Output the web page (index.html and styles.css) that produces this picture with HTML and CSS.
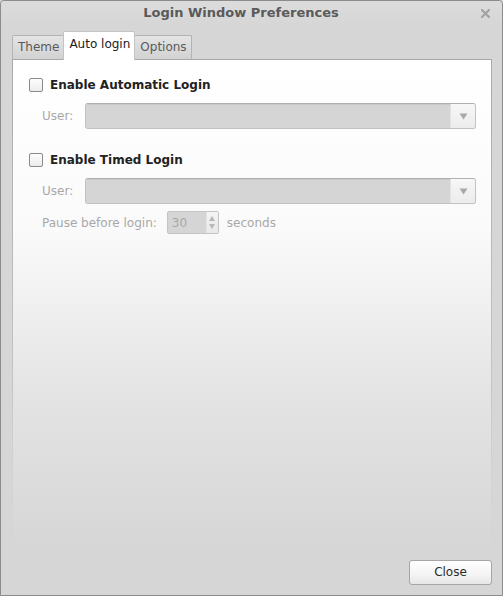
FILE: index.html
```html
<!DOCTYPE html>
<html>
<head>
<meta charset="utf-8">
<link rel="stylesheet" href="styles.css">
</head>
<body>
<div class="window">
  <div class="titlebar">
    <span class="title">Login Window Preferences</span>
    <svg class="close" width="9" height="9" viewBox="0 0 9 9"><path d="M1 1 L8 8 M8 1 L1 8" stroke="#a0a0a0" stroke-width="2" stroke-linecap="round"/></svg>
  </div>
  <div class="body">
    <div class="tabs">
      <div class="tab">Theme</div>
      <div class="tab active">Auto login</div>
      <div class="tab">Options</div>
    </div>
    <div class="panel">
      <div class="check-row">
        <span class="checkbox"></span>
        <span class="check-label">Enable Automatic Login</span>
      </div>
      <div class="field-row">
        <span class="field-label">User:</span>
        <div class="combo"><span class="combo-fill"></span><span class="combo-btn"><svg width="9" height="7" viewBox="0 0 9 7"><path d="M0.5 0.5 H8.5 L4.5 6.5 Z" fill="#a8a8a8"/></svg></span></div>
      </div>
      <div class="check-row second">
        <span class="checkbox"></span>
        <span class="check-label">Enable Timed Login</span>
      </div>
      <div class="field-row">
        <span class="field-label">User:</span>
        <div class="combo"><span class="combo-fill"></span><span class="combo-btn"><svg width="9" height="7" viewBox="0 0 9 7"><path d="M0.5 0.5 H8.5 L4.5 6.5 Z" fill="#a8a8a8"/></svg></span></div>
      </div>
      <div class="pause-row">
        <span class="field-label">Pause before login:</span>
        <div class="spin"><span class="spin-value">30</span><span class="spin-btns"><svg width="6" height="5" viewBox="0 0 6 5"><path d="M0 5 L3 0 L6 5 Z" fill="#b8b8b8"/></svg><svg width="6" height="5" viewBox="0 0 6 5"><path d="M0 0 L3 5 L6 0 Z" fill="#b8b8b8"/></svg></span></div>
        <span class="field-label">seconds</span>
      </div>
    </div>
    <div class="footer">
      <button class="btn">Close</button>
    </div>
  </div>
</div>
</body>
</html>
```
FILE: styles.css
```css
html, body {
  margin: 0;
  padding: 0;
  background: #d6d6d6;
}
body {
  font-family: "DejaVu Sans", sans-serif;
  font-size: 12px;
}
.window {
  box-sizing: border-box;
  width: 503px;
  height: 596px;
  border: 1px solid #8c8c8c;
  border-radius: 4px 4px 0 0;
  background: #d6d6d6;
  display: flex;
  flex-direction: column;
}
.titlebar {
  box-sizing: border-box;
  height: 25px;
  padding-bottom: 2px;
  flex: none;
  display: flex;
  align-items: center;
  justify-content: center;
  position: relative;
  background: linear-gradient(#dcdcdc, #d6d6d6);
  border-radius: 4px 4px 0 0;
}
.title {
  font-weight: bold;
  font-size: 13px;
  color: #5a5a5a;
  margin-left: -21px;
}
.close {
  position: absolute;
  right: 12px;
  top: 8px;
}
.body {
  flex: 1;
  display: flex;
  flex-direction: column;
  padding: 5px 10px 0 11px;
}
.tabs {
  display: flex;
  align-items: flex-end;
  height: 28px;
  padding-left: 0;
  flex: none;
}
.tab {
  box-sizing: border-box;
  height: 24px;
  padding: 0 4px 1px 5px;
  border: 1px solid #b4b4b4;
  border-bottom: none;
  border-radius: 2px 2px 0 0;
  background: linear-gradient(#e4e4e4, #d2d2d2);
  color: #5a5a5a;
  display: flex;
  align-items: center;
}
.tab.active {
  height: 29px;
  margin-bottom: -1px;
  margin-left: -1px;
  margin-right: -1px;
  background: #fff;
  color: #1a1a1a;
  border-color: #c4c4c4;
  padding: 0 4px 4px 5px;
  position: relative;
  z-index: 1;
}
.tab:last-child {
  padding-right: 4px;
}
.panel {
  flex: 1;
  border-top: 1px solid #b0b0b0;
  border-left: 1px solid #b8b8b8;
  border-right: 1px solid #c8c8c8;
  border-image: linear-gradient(#a8a8a8, #c4c4c4 65%, rgba(214,214,214,0)) 1;
  background: linear-gradient(#ffffff 0%, #fafafa 35%, #e4e4e4 68%, #d6d6d6 100%);
  padding: 18px 15px 0 16px;
  display: flex;
  flex-direction: column;
  margin-bottom: 12px;
}
.check-row {
  display: flex;
  align-items: center;
  height: 14px;
}
.check-row.second {
  margin-top: 24px;
}
.checkbox {
  box-sizing: border-box;
  width: 14px;
  height: 14px;
  border: 1px solid #8a8a8a;
  border-radius: 2px;
  background: linear-gradient(#fdfdfd, #ececec);
  margin-right: 7px;
  flex: none;
}
.check-label {
  font-weight: bold;
  color: #222;
}
.field-row {
  display: flex;
  align-items: center;
  margin-top: 11px;
  padding-left: 13px;
}
.field-label {
  color: #a8a8a8;
  white-space: nowrap;
}
.field-row .field-label {
  width: 43px;
  flex: none;
}
.combo {
  flex: 1;
  height: 26px;
  display: flex;
  box-sizing: border-box;
  border: 1px solid #c2c2c2;
  border-top-color: #b0b0b0;
  border-radius: 3px;
  overflow: hidden;
  background: #d5d5d5;
}
.combo-fill {
  flex: 1;
  background: #d5d5d5;
  box-shadow: inset 0 1px 0 #c8c8c8;
}
.combo-btn {
  width: 24px;
  border-left: 1px solid #e2e2e2;
  background: linear-gradient(#f7f7f7, #ececec);
  display: flex;
  align-items: center;
  justify-content: center;
}
.pause-row {
  display: flex;
  align-items: center;
  margin-top: 7px;
  padding-left: 13px;
}
.spin {
  box-sizing: border-box;
  width: 52px;
  height: 23px;
  margin: 0 8px 0 10px;
  border: 1px solid #c4c4c4;
  border-radius: 2px;
  background: #d5d5d5;
  display: flex;
}
.spin-value {
  flex: 1;
  color: #a8a8a8;
  padding-left: 4px;
  display: flex;
  align-items: center;
}
.spin-btns {
  width: 11px;
  border-left: 1px solid #e4e4e4;
  background: linear-gradient(#f4f4f4, #e8e8e8);
  display: flex;
  flex-direction: column;
  align-items: center;
  justify-content: center;
  gap: 3px;
}
.footer {
  height: 35px;
  flex: none;
  display: flex;
  justify-content: flex-end;
  align-items: flex-start;
}
.btn {
  width: 83px;
  height: 25px;
  font-family: "DejaVu Sans", sans-serif;
  font-size: 12px;
  color: #2a2a2a;
  border: 1px solid #a6a6a6;
  border-radius: 3px;
  background: linear-gradient(#ffffff, #f4f4f4 60%, #e6e6e6);
  padding: 0 0 1px 0;
}
```
